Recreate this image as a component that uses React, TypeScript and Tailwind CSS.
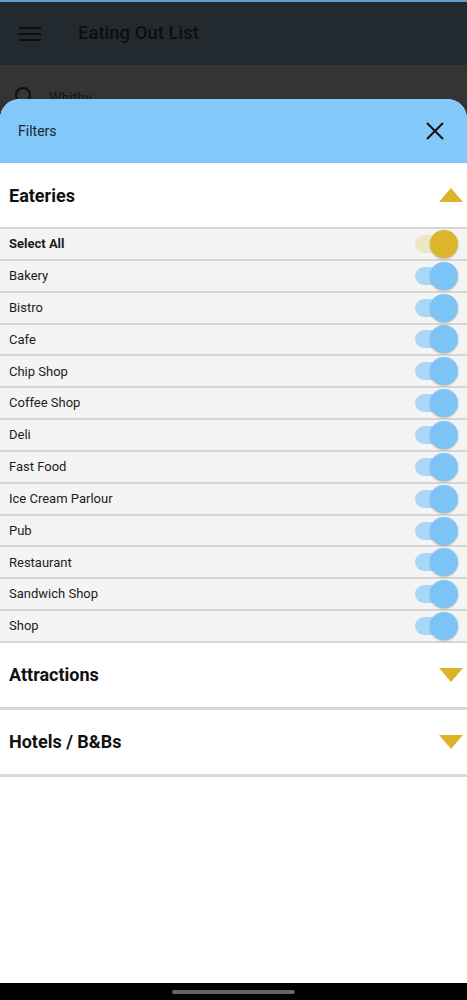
import React from "react";

const eateries = [
    "Bakery",
    "Bistro",
    "Cafe",
    "Chip Shop",
    "Coffee Shop",
    "Deli",
    "Fast Food",
    "Ice Cream Parlour",
    "Pub",
    "Restaurant",
    "Sandwich Shop",
    "Shop",
];

const Toggle = ({ gold }: { gold?: boolean }) => (
    <div className="relative w-[43px] h-[28px]">
        <div className={`absolute left-0 top-[5px] w-[38px] h-[18px] rounded-full ${gold ? "bg-[#ede7c4]" : "bg-[#a9d7f8]"}`} />
        <div className={`absolute right-0 top-0 w-[28px] h-[28px] rounded-full shadow-[0_1px_2px_rgba(0,0,0,0.25)] ${gold ? "bg-[#dcb52a]" : "bg-[#7cc3f6]"}`} />
    </div>
);

const Arrow = ({ up }: { up?: boolean }) => (
    <svg width="24" height="14" viewBox="0 0 24 14">
        {up ? <polygon points="12,0 24,14 0,14" fill="#dbb426" /> : <polygon points="0,0 24,0 12,14" fill="#dbb426" />}
    </svg>
);

const Row = ({ label, bold, gold }: { label: string; bold?: boolean; gold?: boolean }) => (
    <div className="h-[31.85px] flex items-center justify-between pl-[9px] pr-[9px] bg-[#f4f4f4] border-b-2 border-[#d6d6d6]">
        <span className={`text-[13px] text-[#1c1c1c] ${bold ? "font-bold" : ""}`}>{label}</span>
        <Toggle gold={gold} />
    </div>
);

const Section = ({ title, open }: { title: string; open?: boolean }) => (
    <div className="h-[64px] flex items-center justify-between pl-[9px] pr-[4px] bg-white">
        <span className="text-[18px] font-bold text-[#111]">{title}</span>
        <Arrow up={open} />
    </div>
);

const App = () => {
    return (
        <div className="w-[467px] h-[1000px] flex flex-col bg-[#333] overflow-hidden" style={{ fontFamily: "Roboto, 'Noto Sans', sans-serif" }}>
            <div className="h-[2px] bg-[#5d9fcc]" />
            <div className="h-[63px] bg-[#22292f] flex items-center">
                <svg width="22" height="14" viewBox="0 0 22 14" className="ml-[19px]">
                    <rect x="0" y="0" width="22" height="2" fill="#0c0f12" />
                    <rect x="0" y="6" width="22" height="2" fill="#0c0f12" />
                    <rect x="0" y="12" width="22" height="2" fill="#0c0f12" />
                </svg>
                <span className="ml-[37px] text-[18.5px] font-medium text-[#0c0f12]">Eating Out List</span>
            </div>
            <div className="h-[34px] bg-[#343434] overflow-hidden flex items-start pt-[22px] pl-[15px] gap-[18px]">
                <div className="w-[16px] h-[16px] rounded-full border-2 border-[#0e0e0e] shrink-0" />
                <span className="text-[14px] text-[#151515] leading-none pt-[4px]">Whitby</span>
            </div>
            <div className="flex-1 flex flex-col bg-white rounded-t-[20px] overflow-hidden">
                <div className="h-[64px] bg-[#82c9fa] flex items-center justify-between pl-[18px] pr-[23px]">
                    <span className="text-[14px] text-[#1b2631]">Filters</span>
                    <svg width="18" height="18" viewBox="0 0 18 18">
                        <path d="M1 1L17 17M17 1L1 17" stroke="#111" strokeWidth="2" />
                    </svg>
                </div>
                <Section title="Eateries" open />
                <div className="border-t-2 border-[#d6d6d6]">
                    <Row label="Select All" bold gold />
                    {eateries.map((e) => (
                        <Row key={e} label={e} />
                    ))}
                </div>
                <Section title="Attractions" />
                <div className="h-[3px] bg-[#d9d9d9]" />
                <Section title="Hotels / B&Bs" />
                <div className="h-[3px] bg-[#d9d9d9]" />
                <div className="flex-1 bg-white" />
                <div className="h-[17px] bg-black flex justify-center items-center">
                    <div className="w-[123px] h-[4px] rounded-full bg-[#666]" />
                </div>
            </div>
        </div>
    );
};

export default App;
